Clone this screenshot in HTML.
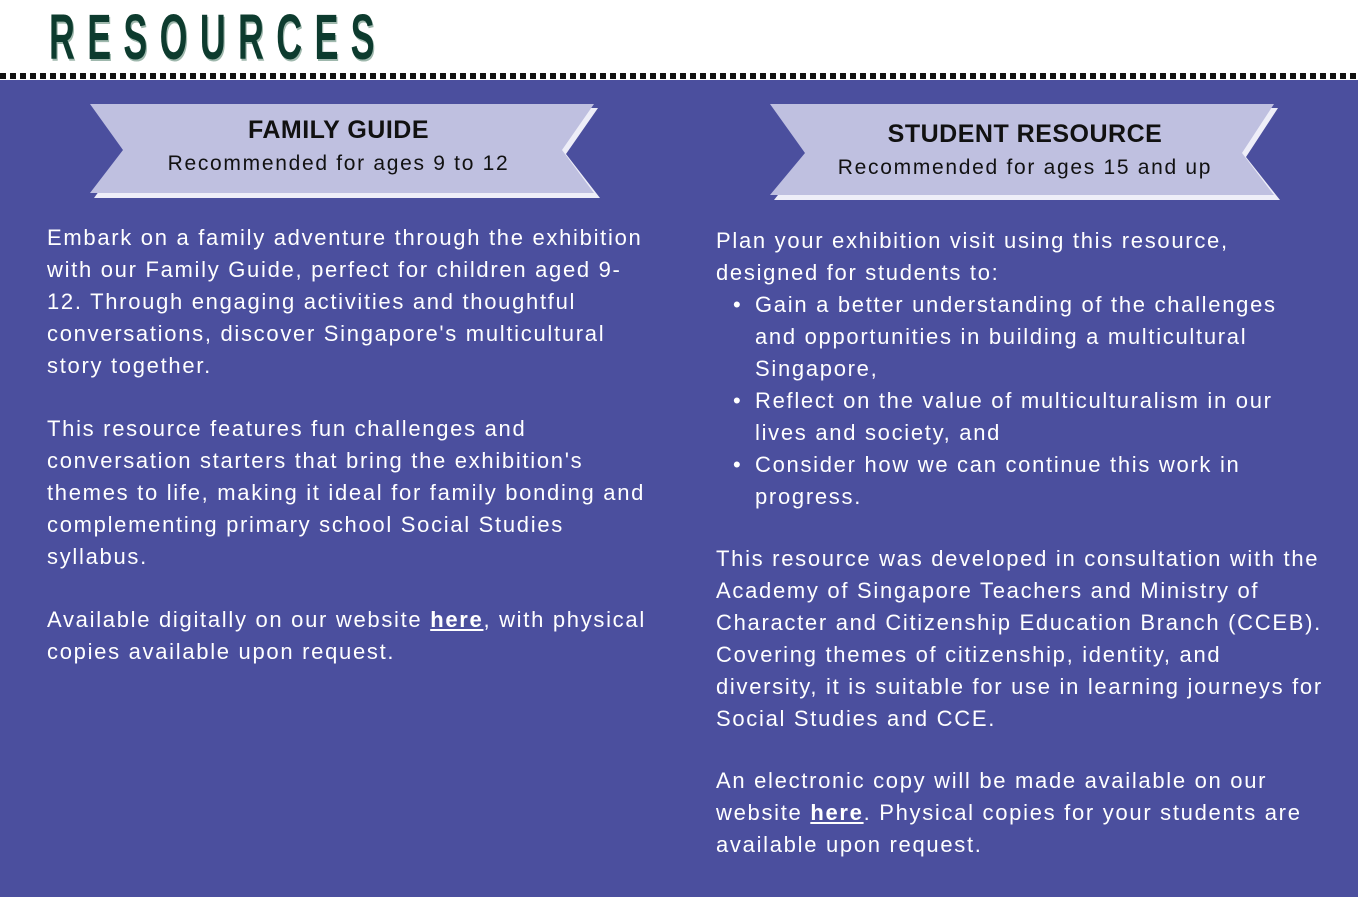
<!DOCTYPE html>
<html><head><meta charset="utf-8"><style>
*{margin:0;padding:0;box-sizing:border-box}
body{width:1358px;height:897px;overflow:hidden;background:#fff;font-family:"Liberation Sans",sans-serif;position:relative}
.title{position:absolute;left:49px;top:2px;font-family:"Liberation Sans Narrow","Liberation Sans",sans-serif;font-weight:bold;font-size:64px;color:#0d3b2e;letter-spacing:22px;text-shadow:2px 2px 0 #9fb8ad;transform:scaleX(0.56);transform-origin:left top;line-height:70px}
.dots{position:absolute;left:0;top:73px;width:1358px;height:6px;background:repeating-linear-gradient(90deg,#111 0 6px,#fff 6px 10px)}
.bg{position:absolute;left:0;top:80px;width:1358px;height:817px;background:#4b4f9e}
svg{position:absolute;left:0;top:0}
.t{position:absolute;color:#fff;font-size:22px;line-height:32px;letter-spacing:1.7px;white-space:nowrap}
.h{position:absolute;text-align:center;color:#111}
.h b{display:block;font-size:25px;letter-spacing:0.5px;line-height:30px}
.h span{display:block;font-size:21px;letter-spacing:1.7px;line-height:26px;margin-top:6px}
a{color:#fff;font-weight:bold;text-decoration:underline}
ul{list-style:none}
li{position:relative;padding-left:39px}
li:before{content:"•";position:absolute;left:17px}
</style></head><body>
<div class="title">RESOURCES</div>
<div class="dots"></div>
<div class="bg"></div>
<svg width="1358" height="897">
<polygon points="94,108 598,108 566,154 600,198 94,198 126,154" fill="#eeeef8"/>
<polygon points="90,104 594,104 562,150 594,193 90,193 123,150" fill="#bfc0e0"/>
<polygon points="774,108 1278,108 1246,157 1280,200 774,200 808,157" fill="#eeeef8"/>
<polygon points="770,104 1274,104 1242,153 1274,195 770,195 805,153" fill="#bfc0e0"/>
</svg>
<div class="h" style="left:90px;width:497px;top:115px"><b>FAMILY GUIDE</b><span>Recommended for ages 9 to 12</span></div>
<div class="h" style="left:770px;width:510px;top:119px"><b>STUDENT RESOURCE</b><span>Recommended for ages 15 and up</span></div>
<div class="t" style="left:47px;top:222px">Embark on a family adventure through the exhibition<br>with our Family Guide, perfect for children aged 9-<br>12. Through engaging activities and thoughtful<br>conversations, discover Singapore's multicultural<br>story together.</div>
<div class="t" style="left:47px;top:413px">This resource features fun challenges and<br>conversation starters that bring the exhibition's<br>themes to life, making it ideal for family bonding and<br>complementing primary school Social Studies<br>syllabus.</div>
<div class="t" style="left:47px;top:604px">Available digitally on our website <a>here</a>, with physical<br>copies available upon request.</div>
<div class="t" style="left:716px;top:225px">Plan your exhibition visit using this resource,<br>designed for students to:
<ul><li>Gain a better understanding of the challenges<br>and opportunities in building a multicultural<br>Singapore,</li><li>Reflect on the value of multiculturalism in our<br>lives and society, and</li><li>Consider how we can continue this work in<br>progress.</li></ul></div>
<div class="t" style="left:716px;top:543px">This resource was developed in consultation with the<br>Academy of Singapore Teachers and Ministry of<br>Character and Citizenship Education Branch (CCEB).<br>Covering themes of citizenship, identity, and<br>diversity, it is suitable for use in learning journeys for<br>Social Studies and CCE.</div>
<div class="t" style="left:716px;top:765px">An electronic copy will be made available on our<br>website <a>here</a>. Physical copies for your students are<br>available upon request.</div>
</body></html>
